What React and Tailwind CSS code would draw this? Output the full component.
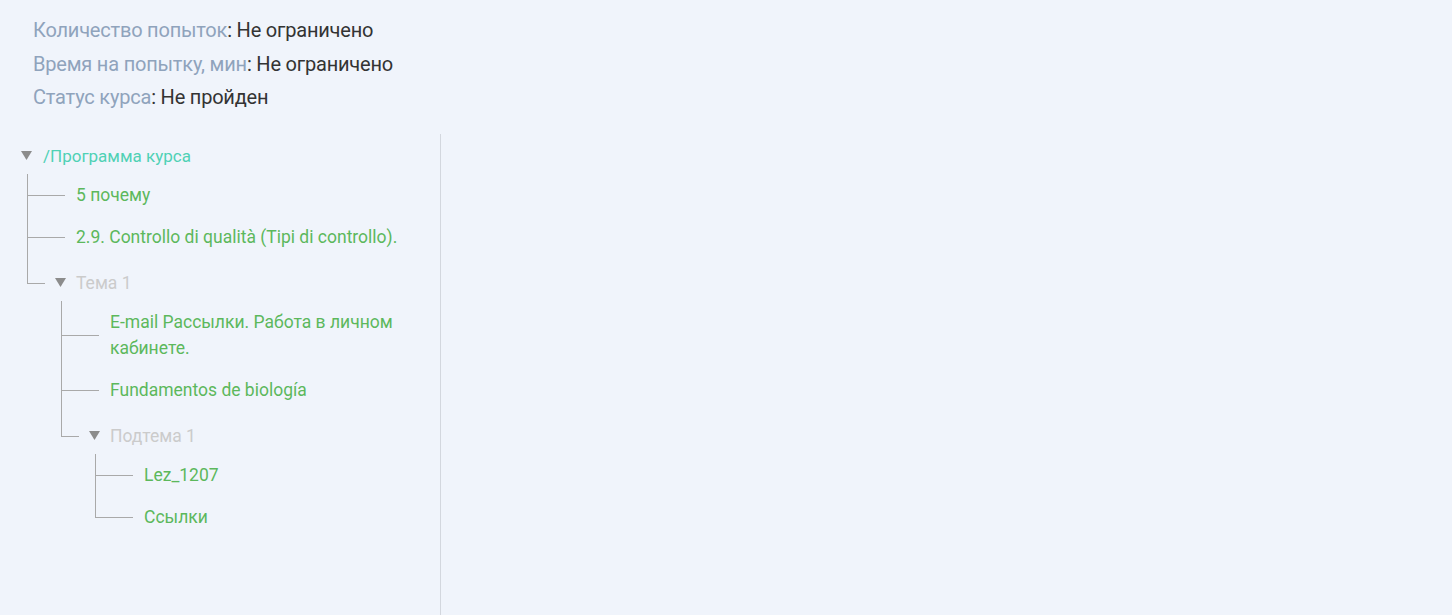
const tree = {
  title: "/Программа курса",
  children: [
    { title: "5 почему" },
    { title: "2.9. Controllo di qualità (Tipi di controllo)." },
    {
      title: "Тема 1",
      children: [
        { title: "E-mail Рассылки. Работа в личном кабинете." },
        { title: "Fundamentos de biología" },
        {
          title: "Подтема 1",
          children: [{ title: "Lez_1207" }, { title: "Ссылки" }],
        },
      ],
    },
  ],
};

const Caret = () => (
  <svg width="11" height="9" viewBox="0 0 11 9" className="shrink-0">
    <path d="M0 0 H11 L5.5 9 Z" fill="#8c8c8c" />
  </svg>
);

const Children = ({ items, nested }) => (
  <div className={nested ? "ml-[34px]" : "ml-[6px]"}>
    {items.map((item, i) => (
      <Item key={i} item={item} last={i === items.length - 1} />
    ))}
  </div>
);

const Item = ({ item, last }) => {
  const branch = !!item.children;
  return (
    <div className="relative">
      {!last && <span className="absolute left-0 top-0 bottom-0 w-px bg-[#a9a9a9]" />}
      {branch ? (
        <div className="relative flex items-center pl-[28px] pt-[12px] pb-[5px]">
          <span className="absolute left-0 top-0 w-px h-[25px] bg-[#a9a9a9]" />
          <span className="absolute left-0 top-[25px] w-[18px] h-px bg-[#a9a9a9]" />
          <Caret />
          <span className="ml-[10px] leading-[26px] text-[#cbcbcb]">{item.title}</span>
        </div>
      ) : (
        <div className="relative flex items-center pl-[49px] py-[8px] pr-[40px]">
          <span className="absolute left-0 top-0 w-px h-1/2 bg-[#a9a9a9]" />
          <span className="absolute left-0 top-1/2 w-[38px] h-px bg-[#a9a9a9]" />
          <span className="leading-[26px] text-[#5cb85c]">{item.title}</span>
        </div>
      )}
      {branch && <Children items={item.children} nested />}
    </div>
  );
};

export default function App() {
  return (
    <div className="min-h-screen flex flex-col bg-[#f0f4fb]" style={{ fontFamily: "Roboto, 'Noto Sans', sans-serif" }}>
      <div className="pl-[33px] pt-[14px] mb-[19px] text-[20px] tracking-[-0.2px] leading-[33.5px] text-[#333]">
        <div>
          <span className="text-[#8fa3bc]">Количество попыток</span>: Не ограничено
        </div>
        <div>
          <span className="text-[#8fa3bc]">Время на попытку, мин</span>: Не ограничено
        </div>
        <div>
          <span className="text-[#8fa3bc]">Статус курса</span>: Не пройден
        </div>
      </div>
      <div className="flex flex-1">
        <div className="w-[441px] border-r border-[#d3d7de] pl-[21px] text-[17.5px]">
          <div className="flex items-center pt-[9px] pb-[5px]">
            <Caret />
            <span className="ml-[11px] leading-[26px] text-[17px] text-[#4fd1b5]">{tree.title}</span>
          </div>
          <Children items={tree.children} />
        </div>
        <div className="flex-1" />
      </div>
    </div>
  );
}
